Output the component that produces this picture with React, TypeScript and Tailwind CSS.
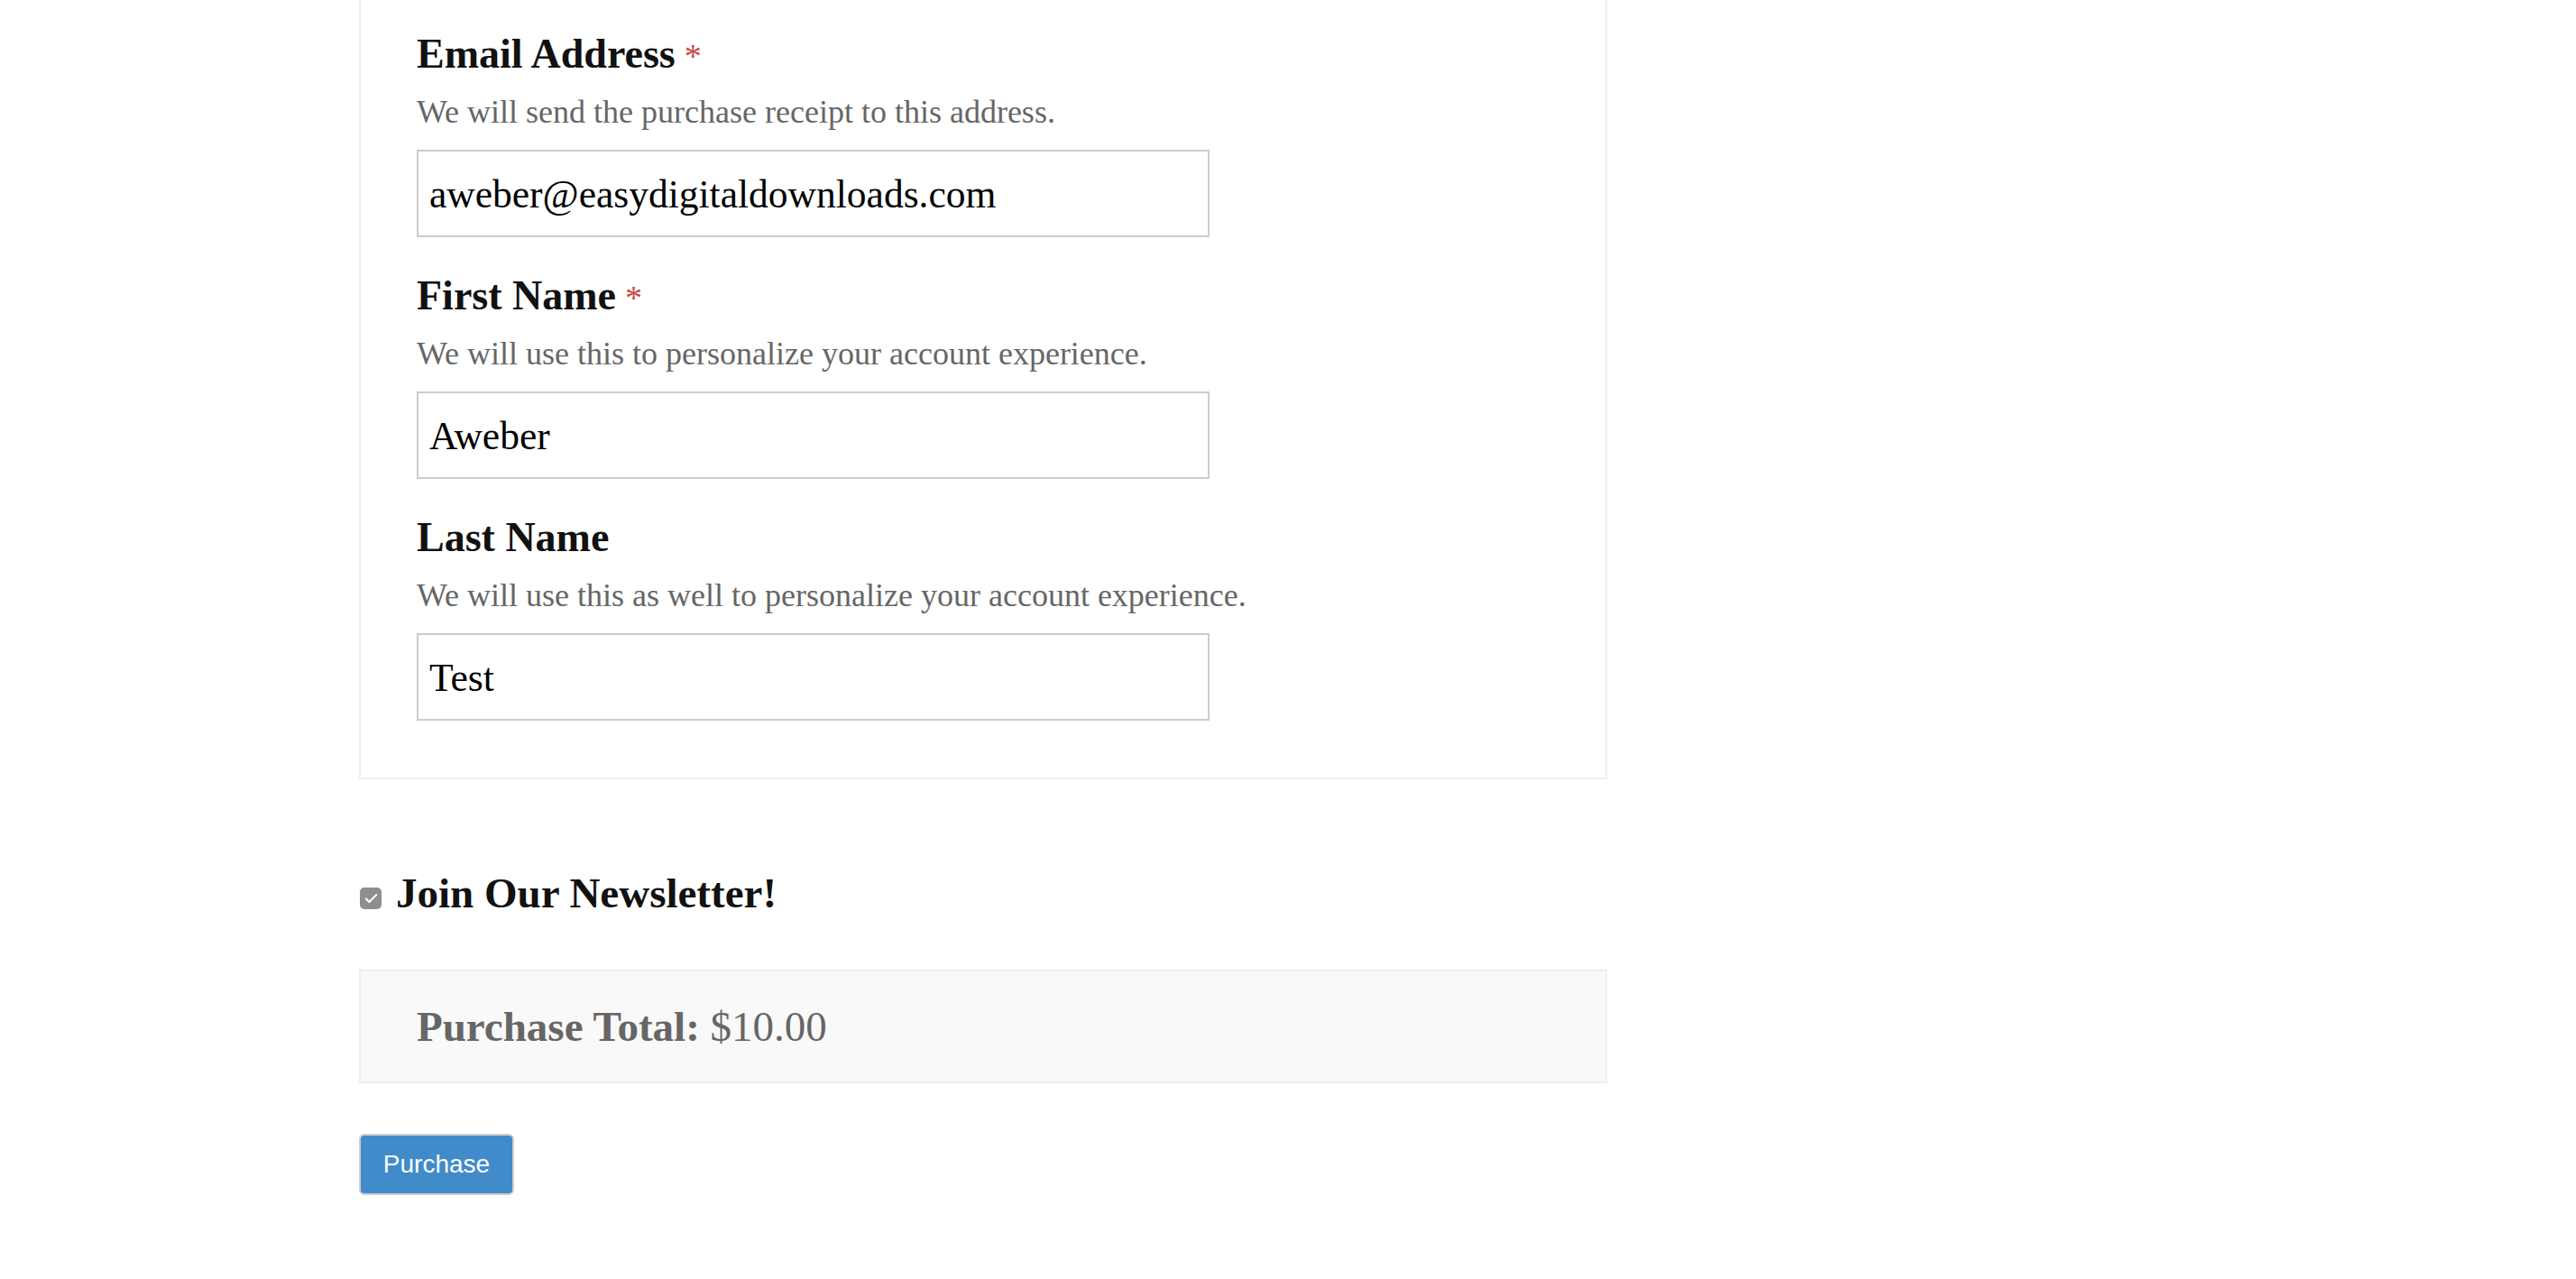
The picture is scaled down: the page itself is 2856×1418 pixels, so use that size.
import { Check } from 'lucide-react'

const fields = [
  { name: 'email', label: 'Email Address', desc: 'We will send the purchase receipt to this address.', value: 'aweber@easydigitaldownloads.com', required: true },
  { name: 'first', label: 'First Name', desc: 'We will use this to personalize your account experience.', value: 'Aweber', required: true },
  { name: 'last', label: 'Last Name', desc: 'We will use this as well to personalize your account experience.', value: 'Test', required: false },
]

const serif = "font-['Liberation_Serif','Times_New_Roman',serif]"

export default function App() {
  return (
    <div className={`min-h-screen bg-white ${serif}`}>
      <div className="ml-[398px] w-[1384px]">
        <fieldset className="border-2 border-t-0 border-[#eeeeee] px-[62px] pt-[32px] pb-[63px]">
          {fields.map((f, i) => (
            <div key={f.name} className={i < fields.length - 1 ? 'mb-[37px]' : ''}>
              <label className="block h-[56px] text-[46px] leading-[56px] font-bold text-[#111111] mb-[14px]">
                {f.label}
                {f.required && <span className="ml-[10px] font-normal text-[38px] leading-none text-[#c94a4a]">*</span>}
              </label>
              <p className="text-[36px] leading-[44px] text-[#666666] mb-[20px]">{f.desc}</p>
              <input
                type="text"
                defaultValue={f.value}
                className="block w-[879px] h-[97px] border-2 border-[#cccccc] px-3 text-[43.5px] text-black outline-none"
              />
            </div>
          ))}
        </fieldset>

        <div className="flex items-start mt-[98px]">
          <span className="mt-[22px] ml-[1px] w-[24px] h-[24px] rounded-[5px] bg-[#8e8e8e] flex items-center justify-center">
            <Check className="w-[17px] h-[17px] text-white" strokeWidth={3} />
          </span>
          <span className="ml-[16px] text-[47px] leading-[56px] font-bold text-[#111111]">Join Our Newsletter!</span>
        </div>

        <div className="mt-[57px] border-2 border-[#eeeeee] bg-[#f9f9f9] px-[62px] py-[33px]">
          <p className="text-[47px] leading-[56px] text-[#666666]">
            <span className="font-bold">Purchase Total:</span> <span>$10.00</span>
          </p>
        </div>

        <button className="mt-[56px] w-[172px] h-[68px] rounded-[6px] border-2 border-[#cfcfcf] bg-[#428bca] text-white text-[28px] font-['Liberation_Sans',Arial,sans-serif]">
          Purchase
        </button>
      </div>
    </div>
  )
}
